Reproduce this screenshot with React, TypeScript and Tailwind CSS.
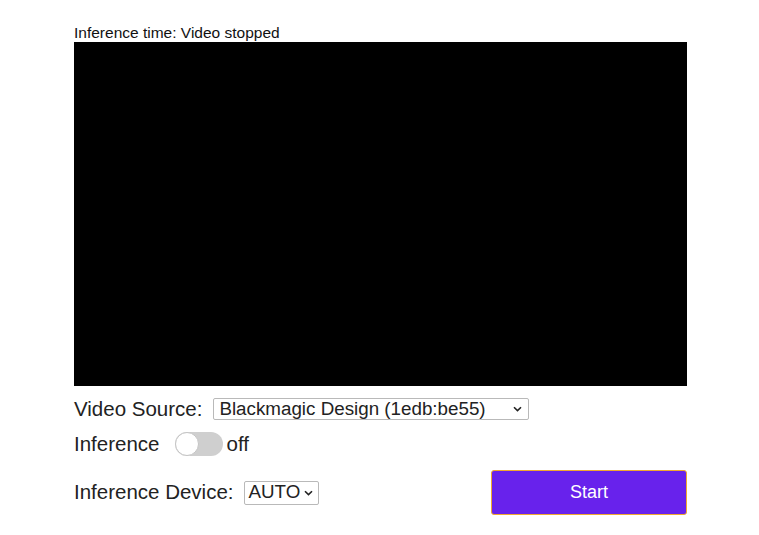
import React from 'react'

function Chevron() {
  return (
    <svg width="9" height="6" viewBox="0 0 9 6" className="shrink-0">
      <path d="M1 1.2 L4.5 4.6 L8 1.2" fill="none" stroke="#222" strokeWidth="1.6" />
    </svg>
  )
}

export default function App() {
  return (
    <div className="min-h-screen bg-white font-['Liberation_Sans',Arial,sans-serif] text-black">
      <div className="ml-[74px] w-[613px] pt-[24px]">
        {/* status line */}
        <div className="text-[15.5px] leading-[18px] text-[#111]">Inference time: Video stopped</div>
        <div className="h-[344px] w-full bg-black" />

        {/* source */}
        <div className="mt-[12px] flex items-center h-[22px]">
          <span className="text-[20.5px] leading-none text-[#222]">Video Source:</span>
          <div className="ml-[11px] flex h-[22px] w-[316px] items-center justify-between rounded-[2px] border border-[#b9b9b9] pl-[5px] pr-[6px]">
            <span className="text-[18.8px] leading-none text-[#222]">Blackmagic Design (1edb:be55)</span>
            <Chevron />
          </div>
        </div>

        {/* inference toggle */}
        <div className="mt-[11px] flex items-center h-[26px]">
          <span className="text-[20.5px] leading-none text-[#222]">Inference</span>
          <div className="ml-[16px] relative h-[24px] w-[48px] rounded-full bg-[#cfcfcf]">
            <div className="absolute left-0 top-0 h-[24px] w-[24px] rounded-full border border-[#c4c4c4] bg-white" />
          </div>
          <span className="ml-[3px] text-[20.5px] leading-none text-[#222]">off</span>
        </div>

        {/* device + start */}
        <div className="mt-[13px] flex items-center justify-between">
          <div className="flex items-center">
            <span className="text-[20.5px] leading-none text-[#222]">Inference Device:</span>
            <div className="ml-[10px] flex h-[24px] w-[75px] items-center gap-[4px] rounded-[2px] border border-[#b9b9b9] pl-[4px]">
              <span className="text-[18.8px] leading-none text-[#222]">AUTO</span>
              <Chevron />
            </div>
          </div>
          <button className="h-[45px] w-[196px] rounded-[3px] border border-[#f0a830] bg-[#6822ec] text-[18px] text-white">
            Start
          </button>
        </div>
      </div>
    </div>
  )
}
